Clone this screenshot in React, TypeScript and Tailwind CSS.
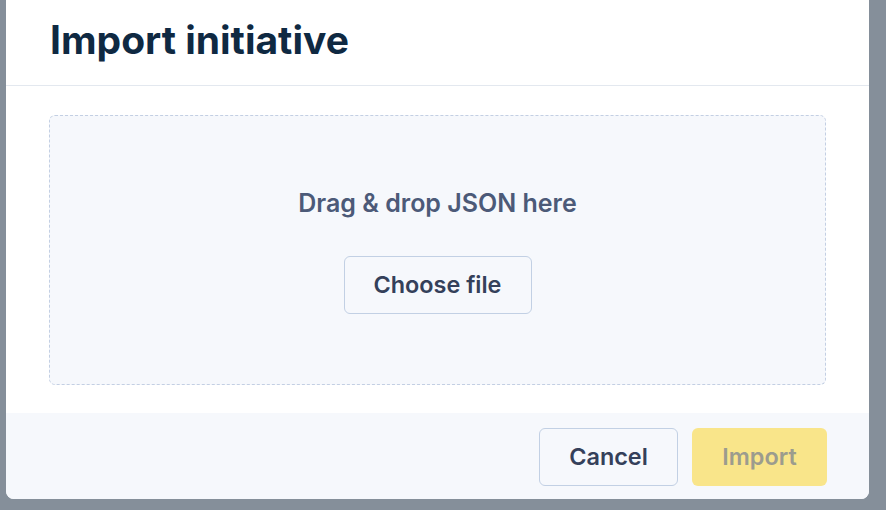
const font = {fontFamily: "Inter, 'Noto Sans', sans-serif"};

const App = () => {
  return (
    <div className="w-[886px] h-[510px] bg-[#858f9a] pl-[6px] overflow-hidden" style={font}>
      <div className="w-[863px] bg-white rounded-b-lg overflow-hidden">
        <div className="h-[86px] border-b border-[#e3e8ef] pl-[44px] pt-[14px]">
          <h1 className="text-[39px] leading-[52px] font-bold text-[#0f2942]">
            Import initiative
          </h1>
        </div>
        <div className="px-[43px] pt-[29px] pb-[28px]">
          <div className="h-[270px] rounded-md border border-dashed border-[#c3cfe3] bg-[#f6f8fc] flex flex-col items-center pt-[71px]">
            <div className="text-[25px] leading-[32px] font-semibold text-[#4c5a78]">
              Drag &amp; drop JSON here
            </div>
            <button className="mt-[37px] w-[188px] h-[58px] rounded-md border border-[#c2d0e4] bg-[#f6f8fc] text-[23.4px] font-semibold text-[#34405a]">
              Choose file
            </button>
          </div>
        </div>
        <div className="h-[86px] bg-[#f6f8fc] flex justify-end items-start gap-[14px] pt-[15px] pr-[42px]">
          <button className="w-[139px] h-[58px] rounded-md border border-[#c2d0e4] bg-[#f6f8fc] text-[23.4px] font-semibold text-[#34405a]">
            Cancel
          </button>
          <button className="w-[135px] h-[58px] rounded-md bg-[#f9e58a] text-[23.4px] font-semibold text-[#9c9c8e]">
            Import
          </button>
        </div>
      </div>
    </div>
  );
};

export default App;
